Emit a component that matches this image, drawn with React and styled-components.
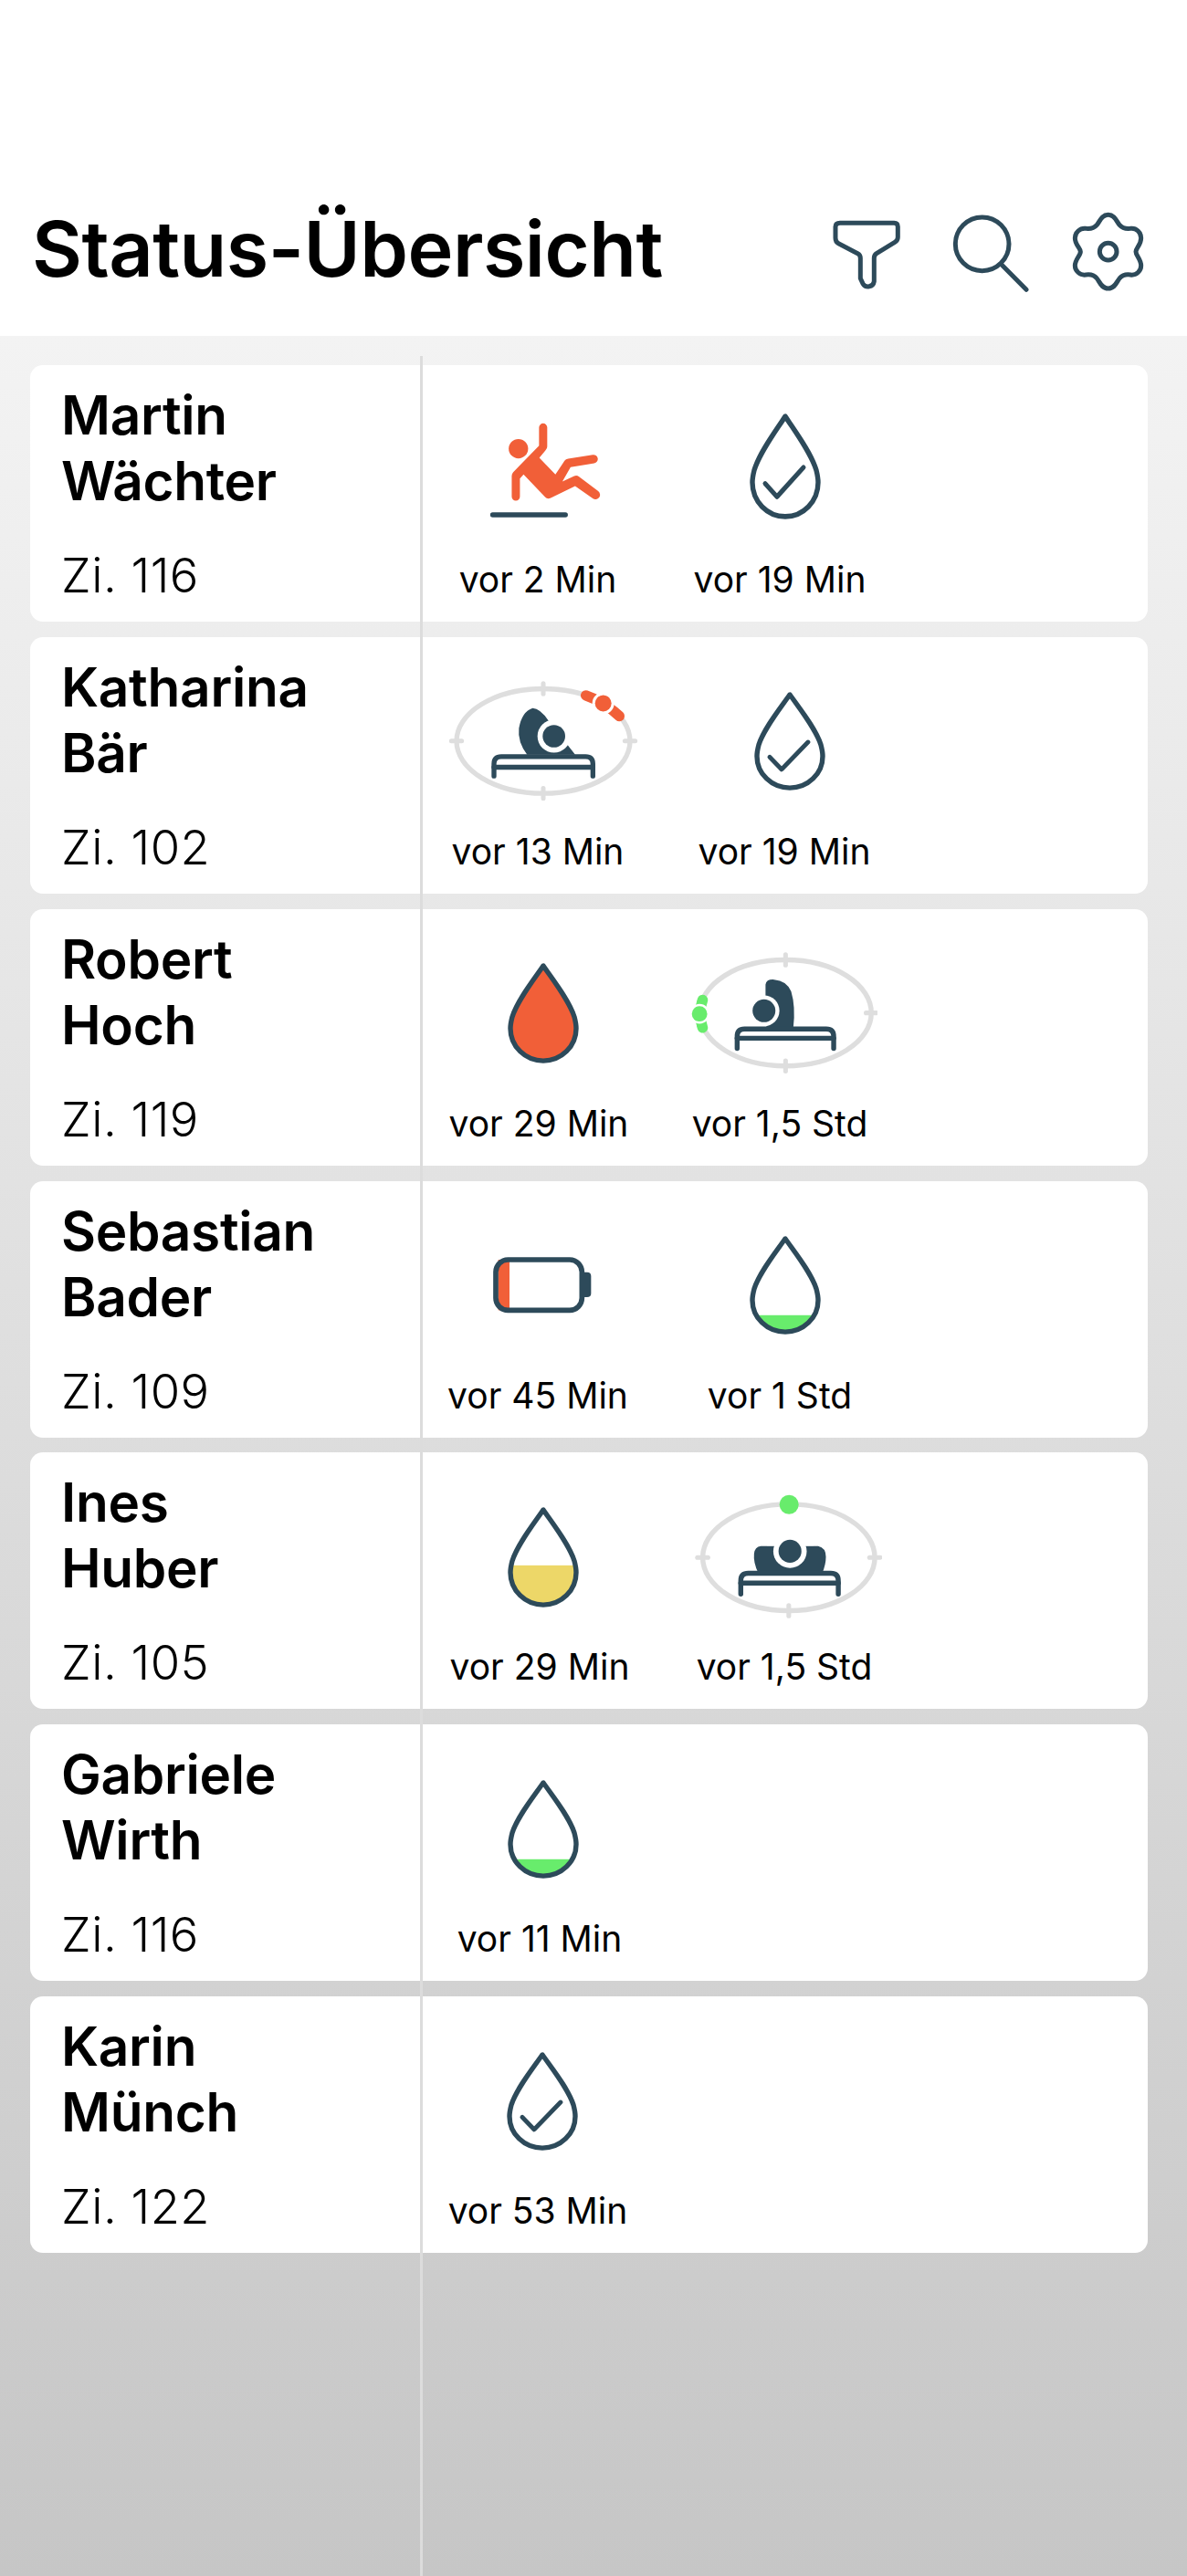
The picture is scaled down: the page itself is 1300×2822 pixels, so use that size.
import React from "react";
import styled, { createGlobalStyle } from "styled-components";

const NAVY = "#2d4a5a";
const ORANGE = "#f15f38";
const GREEN = "#68ec6c";
const YELLOW = "#edd768";
const RING = "#dedede";

const GlobalStyle = createGlobalStyle`
    html, body {
        margin: 0;
        padding: 0;
        background: #fff;
    }
    body {
        font-family: Inter, "Liberation Sans", sans-serif;
        color: #000;
    }
`;

const Page = styled.div`
    position: relative;
    width: 1300px;
    height: 2822px;
    display: flex;
    flex-direction: column;
    overflow: hidden;
`;

const Header = styled.header`
    box-sizing: border-box;
    height: 368px;
    padding: 182px 45px 0 35px;
    background: #fff;
    display: flex;
    align-items: center;
    justify-content: space-between;
`;

const Title = styled.h1`
    margin: 0 0 6px;
    font-size: 84.5px;
    font-weight: 600;
    line-height: 90px;
    letter-spacing: -0.5px;
`;

const Toolbar = styled.div`
    display: flex;
    gap: 45px;
`;

const ToolIcon = styled.svg`
    display: block;
    height: 90px;
    fill: none;
    stroke: ${NAVY};
    stroke-width: 15;
    stroke-linecap: round;
    stroke-linejoin: round;
`;

const Board = styled.main`
    flex: 1;
    box-sizing: border-box;
    padding: 32px 43px 0 33px;
    background: linear-gradient(180deg, #f3f3f3 0%, #c6c6c6 100%);
    display: flex;
    flex-direction: column;
    gap: 16.85px;
`;

const Divider = styled.div`
    position: absolute;
    top: 390px;
    bottom: 0;
    left: 460px;
    width: 3px;
    background: #dcdcdc;
`;

const Card = styled.section`
    height: 281px;
    background: #fff;
    border-radius: 14px;
    display: flex;
`;

const Person = styled.div`
    box-sizing: border-box;
    width: 430px;
    padding: 19px 0 0 34px;
`;

const Name = styled.h2`
    margin: 0;
    font-size: 58.5px;
    font-weight: 600;
    line-height: 72px;
    letter-spacing: -0.3px;
`;

const Room = styled.div`
    margin-top: 35px;
    font-size: 52.5px;
    font-weight: 300;
    line-height: 64px;
    letter-spacing: 0.5px;
`;

const Statuses = styled.div`
    padding-left: 26px;
    display: flex;
    gap: 65px;
`;

const Cell = styled.div`
    box-sizing: border-box;
    width: 200px;
    padding-left: ${(p) => (p.$shift || 0) * 2}px;
    display: flex;
    flex-direction: column;
    align-items: center;
    white-space: nowrap;
`;

const IconSlot = styled.div`
    height: 195px;
    padding-top: 17px;
    padding-left: ${(p) => (p.$dx > 0 ? p.$dx * 2 : 0)}px;
    padding-right: ${(p) => (p.$dx < 0 ? -p.$dx * 2 : 0)}px;
    display: flex;
    align-items: center;
    justify-content: center;
    svg {
        display: block;
        flex: none;
        margin-bottom: ${(p) => (p.$lift || 0) * 2}px;
    }
`;

const Since = styled.div`
    font-size: 39px;
    font-weight: 400;
    line-height: 46px;
`;

const DROP_PATH =
    "M39 3 C29 18 11 41 5 60 C4 64 3 68 3 73 A36 36 0 0 0 75 73 C75 68 74 64 73 60 C67 41 49 18 39 3 Z";

function Drop({ level, color, check, height = 110 }) {
    const clipId = `drop-level-${level}`;
    return (
        <svg width="78" height={height} viewBox="0 0 78 112" preserveAspectRatio="none">
            {color && (
                <>
                    <clipPath id={clipId}>
                        <path d={DROP_PATH} />
                    </clipPath>
                    <rect x="0" y={level} width="78" height={112 - level} fill={color} clipPath={`url(#${clipId})`} />
                </>
            )}
            <path d={DROP_PATH} fill="none" stroke={NAVY} strokeWidth="5.4" strokeLinejoin="round" />
            {check && (
                <path d="M17 74 L30 88 L59 57" fill="none" stroke={NAVY} strokeWidth="5" strokeLinecap="round" strokeLinejoin="round" />
            )}
        </svg>
    );
}

function FallIcon() {
    return (
        <svg width="125" height="108" viewBox="165 100 375 325">
            <circle cx="263" cy="192" r="32" fill={ORANGE} />
            <path
                fill={ORANGE}
                d="M331 122 A13.5 13.5 0 0 1 358 122 V185 Q358 192 352 198 L332 222 L385 277 L415 232 Q419 226 427 225 L508 212 A14 14 0 0 1 513 240 L435 253 L408 300 L447 282 Q455 278 463 284 L526 332 A14 14 0 0 1 508 356 L450 315 L368 355 Q358 359 351 351 L280 277 L268 290 V350 A13.5 13.5 0 0 1 241 350 V282 Q241 274 246 269 L331 182 Z"
            />
            <path d="M178 410 H418" stroke={NAVY} strokeWidth="16" strokeLinecap="round" />
        </svg>
    );
}

function BatteryIcon() {
    return (
        <svg width="110" height="65" viewBox="120 200 330 195">
            <path d="M172 212 H140 V378 H177 V212 Z" fill={ORANGE} />
            <rect x="132" y="212" width="283" height="166" rx="40" fill="none" stroke={NAVY} strokeWidth="17" />
            <path d="M420 253 H432 Q445 253 445 266 V322 Q445 335 432 335 H420 Z" fill={NAVY} />
        </svg>
    );
}

function Bed({ x1, x2, top, bottom, bar }) {
    return (
        <g fill="none" stroke={NAVY} strokeWidth="16" strokeLinecap="round">
            <path d={`M${x1} ${bottom} V${top + 24} Q${x1} ${top} ${x1 + 24} ${top} H${x2 - 24} Q${x2} ${top} ${x2} ${top + 24} V${bottom}`} />
            <path d={`M${x1} ${bar} H${x2}`} />
        </g>
    );
}

function Ring({ cx, cy, rx, ry, top, right, bottom, left }) {
    const reach = 17;
    return (
        <g fill="none" stroke={RING} strokeLinecap="round">
            <ellipse cx={cx} cy={cy} rx={rx} ry={ry} strokeWidth="16" />
            {top && <path d={`M${cx} ${cy - ry - reach} V${cy - ry + reach}`} strokeWidth="15" />}
            {bottom && <path d={`M${cx} ${cy + ry - reach} V${cy + ry + reach}`} strokeWidth="15" />}
            {left && <path d={`M${cx - rx - reach} ${cy} H${cx - rx + reach}`} strokeWidth="15" />}
            {right && <path d={`M${cx + rx - reach} ${cy} H${cx + rx + reach}`} strokeWidth="15" />}
        </g>
    );
}

// head towards the right, sensor in the upper right part of the ring
function PositionRight() {
    return (
        <svg width="210" height="132" viewBox="60 50 630 395">
            <Ring cx={375} cy={247} rx={285} ry={172} top right bottom left />
            <path d="M515 97 Q575 118 625 165" fill="none" stroke={ORANGE} strokeWidth="34" strokeLinecap="round" />
            <circle cx="572" cy="123" r="36" fill="#fff" />
            <circle cx="572" cy="123" r="27" fill={ORANGE} />
            <path d="M322 292 Q290 250 295 205 Q305 150 340 139 Q365 140 392 180 L480 292 Z" fill={NAVY} />
            <circle cx="410" cy="231" r="54" fill="#fff" />
            <circle cx="410" cy="231" r="37" fill={NAVY} />
            <Bed x1={213} x2={538} top={298} bottom={362} bar={333} />
        </svg>
    );
}

// head towards the left, sensor at the left end of the ring
function PositionLeft() {
    return (
        <svg width="206" height="137" viewBox="850 70 610 405">
            <Ring cx={1162} cy={270} rx={278} ry={172} top right bottom />
            <path d="M893 228 Q877 272 893 318" fill="none" stroke={GREEN} strokeWidth="34" strokeLinecap="round" />
            <circle cx="883" cy="273" r="32" fill="#fff" />
            <circle cx="883" cy="273" r="25" fill={GREEN} />
            <path d="M1097 210 V178 Q1100 160 1125 162 Q1165 165 1180 200 Q1195 250 1187 318 H1100 Z" fill={NAVY} />
            <circle cx="1092" cy="263" r="50" fill="#fff" />
            <circle cx="1092" cy="263" r="37" fill={NAVY} />
            <Bed x1={1005} x2={1318} top={322} bottom={385} bar={352} />
        </svg>
    );
}

// lying on the back, sensor at the top of the ring
function PositionBack() {
    return (
        <svg width="206" height="139" viewBox="865 50 605 410">
            <Ring cx={1170} cy={257} rx={278} ry={172} right bottom left />
            <circle cx="1171" cy="86" r="31" fill={GREEN} />
            <path d="M1080 220 H1265 Q1290 225 1290 255 Q1290 280 1278 308 H1072 Q1055 275 1058 245 Q1060 222 1080 220 Z" fill={NAVY} />
            <circle cx="1174" cy="237" r="54" fill="#fff" />
            <path d="M1100 180 H1250 V219 H1100 Z" fill="#fff" />
            <circle cx="1174" cy="237" r="37" fill={NAVY} />
            <Bed x1={1015} x2={1330} top={308} bottom={375} bar={340} />
        </svg>
    );
}

const residents = [
    {
        first: "Martin",
        last: "Wächter",
        room: "Zi. 116",
        items: [
            { icon: <FallIcon />, dx: 8, since: "vor 2 Min" },
            { icon: <Drop check height={116} />, dx: 6, lift: 4, since: "vor 19 Min" },
        ],
    },
    {
        first: "Katharina",
        last: "Bär",
        room: "Zi. 102",
        items: [
            { icon: <PositionRight />, dx: 6, since: "vor 13 Min" },
            { icon: <Drop check height={108} />, dx: 6, shift: 5, since: "vor 19 Min" },
        ],
    },
    {
        first: "Robert",
        last: "Hoch",
        room: "Zi. 119",
        items: [
            { icon: <Drop level={0} color={ORANGE} />, dx: 5, shift: 1, since: "vor 29 Min" },
            { icon: <PositionLeft />, dx: 4, since: "vor 1,5 Std" },
        ],
    },
    {
        first: "Sebastian",
        last: "Bader",
        room: "Zi. 109",
        items: [
            { icon: <BatteryIcon />, dx: 5, since: "vor 45 Min" },
            { icon: <Drop level={90} color={GREEN} height={108} />, dx: 6, since: "vor 1 Std" },
        ],
    },
    {
        first: "Ines",
        last: "Huber",
        room: "Zi. 105",
        items: [
            { icon: <Drop level={65} color={YELLOW} />, dx: 4, shift: 2, since: "vor 29 Min" },
            { icon: <PositionBack />, dx: 4, shift: 5, since: "vor 1,5 Std" },
        ],
    },
    {
        first: "Gabriele",
        last: "Wirth",
        room: "Zi. 116",
        items: [{ icon: <Drop level={90} color={GREEN} height={108} />, dx: 4, shift: 2, since: "vor 11 Min" }],
    },
    {
        first: "Karin",
        last: "Münch",
        room: "Zi. 122",
        items: [{ icon: <Drop check height={108} />, dx: 5, since: "vor 53 Min" }],
    },
];

export default function App() {
    return (
        <Page>
            <GlobalStyle />
            <Header>
                <Title>Status-Übersicht</Title>
                <Toolbar>
                    <ToolIcon width="88.3" viewBox="90 60 265 270">
                        <path d="M120 103 H298 Q310 103 310 115 V150 Q310 160 300 166 L240 203 Q232 208 232 218 V295 A20 20 0 0 1 195 302 L187 285 V218 Q187 208 178 203 L115 170 Q105 165 105 152 V115 Q105 103 120 103 Z" />
                    </ToolIcon>
                    <ToolIcon width="85" viewBox="490 60 255 270">
                        <circle cx="588" cy="172" r="88" />
                        <path d="M655 243 L733 322" />
                    </ToolIcon>
                    <ToolIcon width="81.7" viewBox="880 60 245 270">
                        <path d="M1002 76 C1025 76 1030 100 1040 110 C1050 122 1065 122 1075 121 C1095 118 1110 135 1110 152 C1110 175 1093 185 1093 197 C1093 210 1110 222 1110 243 C1110 260 1095 276 1075 273 C1060 271 1050 272 1040 284 C1030 295 1025 318 1002 318 C979 318 974 295 964 284 C954 272 944 271 929 273 C909 276 893 260 893 243 C893 222 911 210 911 197 C911 185 893 175 893 152 C893 135 909 118 929 121 C939 122 954 122 964 110 C974 100 979 76 1002 76 Z" />
                        <circle cx="1002" cy="197" r="28" />
                    </ToolIcon>
                </Toolbar>
            </Header>
            <Board>
                {residents.map((r) => (
                    <Card key={r.first}>
                        <Person>
                            <Name>
                                {r.first}
                                <br />
                                {r.last}
                            </Name>
                            <Room>{r.room}</Room>
                        </Person>
                        <Statuses>
                            {r.items.map((item) => (
                                <Cell key={item.since} $shift={item.shift}>
                                    <IconSlot $dx={item.dx || 0} $lift={item.lift}>
                                        {item.icon}
                                    </IconSlot>
                                    <Since>{item.since}</Since>
                                </Cell>
                            ))}
                        </Statuses>
                    </Card>
                ))}
            </Board>
            <Divider />
        </Page>
    );
}
